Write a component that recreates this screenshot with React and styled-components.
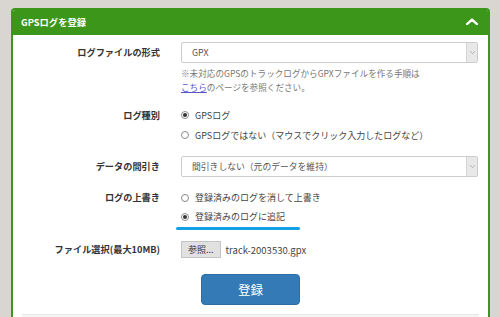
import React from 'react';
import styled, { createGlobalStyle } from 'styled-components';

const GlobalStyle = createGlobalStyle`
  html, body {
    margin: 0;
    padding: 0;
    background: #d9d5d0;
    overflow: hidden;
  }
  body {
    font-family: "Noto Sans CJK JP", "Noto Sans", sans-serif;
    color: #333;
  }
`;

const Page = styled.div`
  padding: 8px 10px 0 11px;
  height: 317px;
  box-sizing: border-box;
  overflow: hidden;
`;

const Panel = styled.div`
  background: #fff;
  border: 2px solid #3c961a;
  border-bottom: none;
  border-radius: 4px 4px 0 0;
  height: 100%;
  box-sizing: border-box;
  overflow: hidden;
`;

const Header = styled.div`
  display: flex;
  align-items: center;
  justify-content: space-between;
  height: 27px;
  margin: -2px -2px 0;
  padding: 0 12px 0 10px;
  background: #3c961a;
  border-radius: 3px 3px 0 0;
  color: #fff;
  font-size: 9.3px;
  font-weight: bold;
`;

const Body = styled.div`
  padding: 7px 10px 0 0;
`;

const Row = styled.div`
  display: flex;
  align-items: flex-start;
  margin-bottom: ${({ gap }) => gap ?? 11}px;
`;

const Label = styled.div`
  width: 147px;
  flex: none;
  margin-right: 21px;
  text-align: right;
  font-size: 9.2px;
  font-weight: bold;
  line-height: ${({ lh }) => lh ?? 21}px;
  color: #333;
`;

const Control = styled.div`
  flex: 1;
  min-width: 0;
`;

const Select = styled.div`
  display: flex;
  align-items: stretch;
  height: 21px;
  box-sizing: border-box;
  border: 1px solid #ccc;
  border-radius: 2px;
  font-size: 8.8px;
  color: #555;
`;

const SelectText = styled.div`
  flex: 1;
  display: flex;
  align-items: center;
  padding-left: 10px;
`;

const SelectArrow = styled.div`
  width: 10px;
  display: flex;
  align-items: center;
  justify-content: center;
  background: #e8e8e8;
  border-left: 1px solid #d4d4d4;
`;

const Help = styled.div`
  margin-top: 3px;
  font-size: 8.6px;
  line-height: 14px;
  color: #777;
`;

const HelpLink = styled.a`
  color: #5a55c8;
  text-decoration: underline;
`;

const RadioLine = styled.label`
  display: flex;
  align-items: center;
  height: ${({ h }) => h ?? 20}px;
  font-size: 9px;
  color: #444;
`;

const RadioDot = styled.span`
  width: 8px;
  height: 8px;
  box-sizing: border-box;
  border: 1px solid #8a8a8a;
  border-radius: 50%;
  margin-right: 6px;
  display: flex;
  align-items: center;
  justify-content: center;
  background: #fff;

  &::after {
    content: '';
    width: 4px;
    height: 4px;
    border-radius: 50%;
    background: ${({ checked }) => (checked ? '#333' : 'transparent')};
  }
`;

const Marker = styled.div`
  width: 124px;
  height: 3px;
  margin: 1px 0 0 -5px;
  border-radius: 2px;
  background: #14a0e6;
`;

const FileLine = styled.div`
  display: flex;
  align-items: center;
  height: 17px;
  font-size: 9.5px;
  color: #444;
`;

const FileButton = styled.span`
  height: 17px;
  box-sizing: border-box;
  padding: 0 6px;
  display: flex;
  align-items: center;
  background: #e1e1e1;
  border: 1px solid #c4c4c4;
  font-size: 9px;
  color: #333;
  margin-right: 5px;
`;

const Actions = styled.div`
  display: flex;
  justify-content: center;
  padding: 16px 0 9px 10px;
`;

const Submit = styled.button`
  width: 99px;
  height: 31px;
  border: 1px solid #2e6da4;
  border-radius: 4px;
  background: #337ab7;
  color: #fff;
  font-family: inherit;
  font-size: 12.5px;
`;

const Footer = styled.div`
  margin: 0 9px;
  height: 20px;
  background: #f5f5f5;
  border-top: 1px solid #e6e6e6;
`;

const Chevron = ({ dir = 'up', size = 12, color = '#fff', width = 2.4 }) => (
  <svg width={size} height={size * 0.6} viewBox="0 0 12 7">
    <polyline
      points={dir === 'up' ? '1,6 6,1.5 11,6' : '1,1 6,6 11,1'}
      fill="none"
      stroke={color}
      strokeWidth={width}
      strokeLinecap="round"
      strokeLinejoin="round"
    />
  </svg>
);

const Radio = ({ checked, children, h }) => (
  <RadioLine h={h}>
    <RadioDot checked={checked} />
    {children}
  </RadioLine>
);

const Dropdown = ({ children }) => (
  <Select>
    <SelectText>{children}</SelectText>
    <SelectArrow>
      <Chevron dir="down" size={5} color="#888" width={1.4} />
    </SelectArrow>
  </Select>
);

export default function App() {
  return (
    <Page>
      <GlobalStyle />
      <Panel>
        <Header>
          <span>GPSログを登録</span>
          <Chevron />
        </Header>
        <Body>
          <Row gap={11}>
            <Label>ログファイルの形式</Label>
            <Control>
              <Dropdown>GPX</Dropdown>
              <Help>
                ※未対応のGPSのトラックログからGPXファイルを作る手順は
                <br />
                <HelpLink>こちら</HelpLink>のページを参照ください。
              </Help>
            </Control>
          </Row>
          <Row gap={11}>
            <Label lh={20}>ログ種別</Label>
            <Control>
              <Radio checked>GPSログ</Radio>
              <Radio>GPSログではない（マウスでクリック入力したログなど）</Radio>
            </Control>
          </Row>
          <Row gap={11}>
            <Label>データの間引き</Label>
            <Control>
              <Dropdown>間引きしない（元のデータを維持）</Dropdown>
            </Control>
          </Row>
          <Row gap={11}>
            <Label lh={19}>ログの上書き</Label>
            <Control>
              <Radio h={19}>登録済みのログを消して上書き</Radio>
              <Radio h={19} checked>登録済みのログに追記</Radio>
              <Marker />
            </Control>
          </Row>
          <Row gap={0}>
            <Label lh={17}>ファイル選択(最大10MB)</Label>
            <Control>
              <FileLine>
                <FileButton>参照...</FileButton>
                track-2003530.gpx
              </FileLine>
            </Control>
          </Row>
          <Actions>
            <Submit>登録</Submit>
          </Actions>
        </Body>
        <Footer />
      </Panel>
    </Page>
  );
}
